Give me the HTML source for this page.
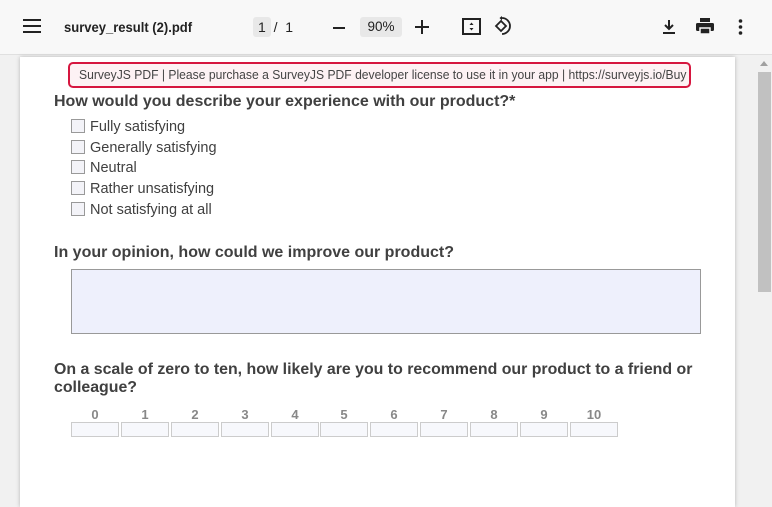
<!DOCTYPE html>
<html><head><meta charset="utf-8"><style>
*{margin:0;padding:0;box-sizing:border-box}
body{width:772px;height:494px;overflow:hidden;background:#f1f1f1;font-family:"Liberation Sans",Arial,sans-serif;position:relative}
.tb{position:absolute;left:0;top:0;width:772px;height:55px;background:#f8f8f8;border-bottom:1px solid #e0e0e0}
.tb *{position:absolute}
.page{position:absolute;left:20px;top:57px;width:715px;height:450px;background:#fff;box-shadow:0 0 4px rgba(0,0,0,.25)}
.sb{position:absolute;left:757px;top:57px;width:15px;height:437px;background:#f1f1f1}
.thumb{position:absolute;left:758px;top:72px;width:13px;height:220px;background:#c1c1c1}
.ban{position:absolute;left:68px;top:62px;width:623px;height:26px;border:2px solid #d6163f;border-radius:5px;background:#fdf2f4;color:#444;font-size:12.5px;line-height:22px;white-space:nowrap;overflow:hidden}
.ban span{display:inline-block;transform:scaleX(0.97);transform-origin:0 50%;margin-left:9px}
.q{position:absolute;left:54px;font-weight:bold;font-size:16px;color:#404040;white-space:nowrap}
.opt{position:absolute;left:71px;font-size:14.5px;color:#404040;height:16px;line-height:16px}
.opt i{display:inline-block;width:14px;height:14px;border:1px solid #999;background:#f3f3f8;vertical-align:-2px;margin-right:5px}
.ta{position:absolute;left:71px;top:269px;width:630px;height:65px;border:1px solid #999;background:#eef0fc}
.n{position:absolute;top:407px;width:48px;text-align:center;font-size:13px;font-weight:bold;color:#888}
.bx{position:absolute;top:422px;width:48px;height:15px;border:1px solid #ccc;background:#f7f8fc}
</style></head><body>
<div class="tb">
<svg style="left:23px;top:19px" width="18" height="14" viewBox="0 0 18 14"><path d="M0 1h18M0 7h18M0 13h18" stroke="#222" stroke-width="2"/></svg>
<div style="left:64px;top:19px;font-size:14px;font-weight:bold;color:#222;transform:scaleX(0.93);transform-origin:0 0;white-space:nowrap">survey_result (2).pdf</div>
<div style="left:253px;top:17px;width:18px;height:20px;background:#e8e8e8;border-radius:3px"></div>
<div style="left:258px;top:19px;font-size:14px;color:#222">1&nbsp;&nbsp;/&nbsp;&nbsp;1</div>
<div style="left:333px;top:27px;width:12px;height:2px;background:#222"></div>
<div style="left:360px;top:17px;width:42px;height:20px;background:#e8e8e8;border-radius:3px;font-size:13.5px;color:#222;text-align:center;line-height:20px">90%</div>
<svg style="left:415px;top:20px" width="14" height="14"><path d="M7 0v14M0 7h14" stroke="#222" stroke-width="2"/></svg>
<svg style="left:462px;top:18px" width="20" height="18" viewBox="0 0 20 18"><rect x="1" y="1" width="17" height="15" fill="none" stroke="#222" stroke-width="2"/><path d="M7.5 7L9.5 4.5 11.5 7zM7.5 10L9.5 12.5 11.5 10z" fill="#222"/></svg>
<svg style="left:493px;top:16px" width="20" height="20" viewBox="0 0 20 20"><path d="M3 10l5-5 5 5-5 5z" fill="none" stroke="#222" stroke-width="1.8"/><path d="M9 2a8 8 0 1 1 0 16" fill="none" stroke="#222" stroke-width="1.8"/><path d="M9 0v4.5L6.5 2z" fill="#222"/></svg>
<svg style="left:662px;top:19px" width="14" height="16" viewBox="0 0 14 16"><path d="M7 1v9M3 6l4 4 4-4M1 14h12" fill="none" stroke="#222" stroke-width="2"/></svg>
<svg style="left:696px;top:18px" width="18" height="17" viewBox="0 0 18 17"><rect x="4" y="0" width="10" height="4" fill="#222"/><rect x="0" y="5" width="18" height="8" rx="1.5" fill="#222"/><rect x="4" y="10" width="10" height="6" fill="#222" stroke="#f8f8f8" stroke-width="1.5"/></svg>
<svg style="left:738px;top:19px" width="5" height="16"><circle cx="2.5" cy="2" r="1.8" fill="#222"/><circle cx="2.5" cy="8" r="1.8" fill="#222"/><circle cx="2.5" cy="14" r="1.8" fill="#222"/></svg>
</div>
<div class="page"></div>
<div class="sb"></div>
<svg style="position:absolute;left:760px;top:61px" width="8" height="5"><path d="M0 5L4 0 8 5z" fill="#a0a0a0"/></svg>
<div class="thumb"></div>
<div class="ban"><span>SurveyJS PDF | Please purchase a SurveyJS PDF developer license to use it in your app | https://surveyjs.io/Buy</span></div>
<div class="q" style="top:93px">How would you describe your experience with our product?*</div>
<div class="opt" style="top:119px"><i></i>Fully satisfying</div>
<div class="opt" style="top:140px"><i></i>Generally satisfying</div>
<div class="opt" style="top:160px"><i></i>Neutral</div>
<div class="opt" style="top:181px"><i></i>Rather unsatisfying</div>
<div class="opt" style="top:202px"><i></i>Not satisfying at all</div>
<div class="q" style="top:244px">In your opinion, how could we improve our product?</div>
<div class="ta"></div>
<div class="q" style="top:361px;line-height:18px;font-size:15.9px">On a scale of zero to ten, how likely are you to recommend our product to a friend or<br>colleague?</div>
<div class="n" style="left:71px">0</div><div class="bx" style="left:71px"></div>
<div class="n" style="left:121px">1</div><div class="bx" style="left:121px"></div>
<div class="n" style="left:171px">2</div><div class="bx" style="left:171px"></div>
<div class="n" style="left:221px">3</div><div class="bx" style="left:221px"></div>
<div class="n" style="left:271px">4</div><div class="bx" style="left:271px"></div>
<div class="n" style="left:320px">5</div><div class="bx" style="left:320px"></div>
<div class="n" style="left:370px">6</div><div class="bx" style="left:370px"></div>
<div class="n" style="left:420px">7</div><div class="bx" style="left:420px"></div>
<div class="n" style="left:470px">8</div><div class="bx" style="left:470px"></div>
<div class="n" style="left:520px">9</div><div class="bx" style="left:520px"></div>
<div class="n" style="left:570px">10</div><div class="bx" style="left:570px"></div>
</body></html>
